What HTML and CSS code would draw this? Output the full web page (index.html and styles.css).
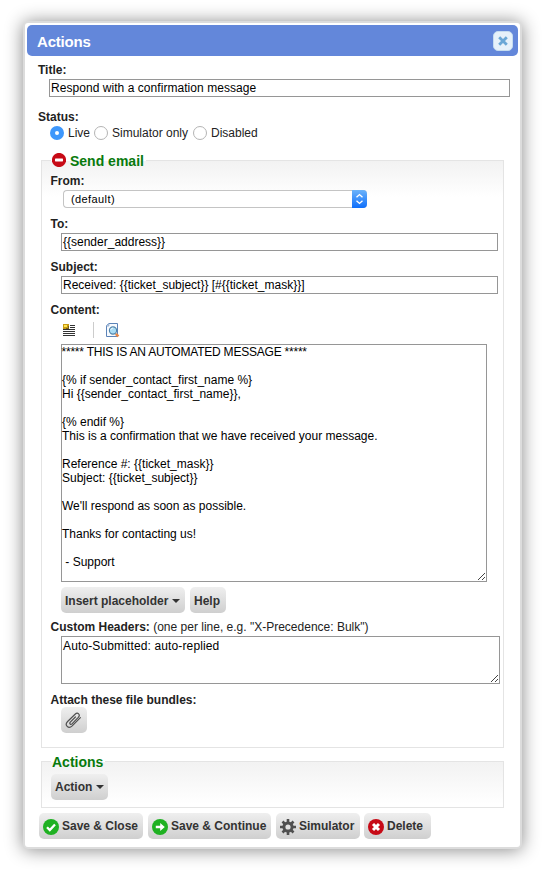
FILE: index.html
```html
<!DOCTYPE html>
<html lang="en">
<head>
<meta charset="utf-8">
<title>Actions</title>
<link rel="stylesheet" href="styles.css">
</head>
<body>
<div class="dialog">
  <header class="titlebar">
    <span>Actions</span>
    <button class="close" type="button" aria-label="Close">
      <svg width="10" height="10" viewBox="0 0 10 10"><path d="M2.2 2.2l5.6 5.6M7.8 2.2l-5.6 5.6" stroke="#6aa7d6" stroke-width="2.8" stroke-linecap="square"/></svg>
    </button>
  </header>
  <form class="form">
    <div class="label">Title:</div>
    <div class="field title-field">Respond with a confirmation message</div>
    <div class="label status-label">Status:</div>
    <div class="radios">
      <span class="radio on"></span><span class="live">Live</span>
      <span class="radio"></span><span class="sim">Simulator only</span>
      <span class="radio"></span><span>Disabled</span>
    </div>

    <fieldset class="group email">
      <legend>
        <svg width="14" height="14" viewBox="0 0 14 14"><circle cx="7" cy="7" r="7.1" fill="#c70a16"/><rect x="3" y="5.6" width="8" height="2.8" rx=".6" fill="#fff"/></svg>
        <span>Send email</span>
      </legend>
      <div class="label">From:</div>
      <div class="select">
        <span>(default)</span>
        <svg width="15" height="18" viewBox="0 0 15 18"><path d="M4.5 7.3l3-2.7 3 2.7M4.5 10.7l3 2.7 3-2.7" fill="none" stroke="#fff" stroke-width="1.4"/></svg>
      </div>
      <div class="label to">To:</div>
      <div class="field">{{sender_address}}</div>
      <div class="label subject">Subject:</div>
      <div class="field">Received: {{ticket_subject}} [#{{ticket_mask}}]</div>
      <div class="label content-label">Content:</div>
      <div class="toolbar">
        <svg class="ico-sign" width="12" height="12" viewBox="0 0 12 12">
          <path d="M0 5.5h12M0 7.5h12M0 9.5h12M0 11.5h12M7 1.5h5M7 3.5h5" stroke="#333"/>
          <rect width="6" height="5" fill="#c79a12"/><rect x="1" y="1" width="3" height="2" fill="#ffe650"/><path d="M3 4.5h3M5.5 2v3" stroke="#776018"/>
        </svg>
        <i class="sep"></i>
        <svg width="14" height="15" viewBox="0 0 14 15">
          <path d="M.5 2.8L2.8.5h8.7v13H.5z" fill="#f7fafe" stroke="#5c83b8"/>
          <path d="M.5 3h2.3V.5" fill="none" stroke="#8ba9ce"/>
          <path d="M9.8 10.8l2.6 2.6" stroke="#e88848" stroke-width="2.6"/>
          <circle cx="7" cy="7.5" r="3.6" fill="#a9dcf5" stroke="#4e82a8" stroke-width="1.1"/>
          <path d="M4.7 7a2.5 2.5 0 0 1 2.5-2" stroke="#effaff" fill="none"/>
        </svg>
      </div>
      <div class="textarea body"><span class="caps">***** THIS IS AN AUTOMATED MESSAGE *****</span>

{% if sender_contact_first_name %}
Hi {{sender_contact_first_name}},

{% endif %}
This is a confirmation that we have received your message.

Reference #: {{ticket_mask}}
Subject: {{ticket_subject}}

We'll respond as soon as possible.

Thanks for contacting us!

 - Support<svg class="grip" width="7" height="7" viewBox="0 0 7 7" shape-rendering="crispEdges"><path d="M0 6.5h1M1 5.5h1M2 4.5h1M3 3.5h1M4 2.5h1M5 1.5h1M6 .5h1M4 6.5h1M5 5.5h1M6 4.5h1" stroke="#444"/></svg></div>
      <div class="buttons inner">
        <button class="btn insert" type="button">Insert placeholder<i class="caret"></i></button>
        <button class="btn help" type="button">Help</button>
      </div>
      <div class="label headers-label">Custom Headers: <span class="hint">(one per line, e.g. "X-Precedence: Bulk")</span></div>
      <div class="textarea headers">Auto-Submitted: auto-replied<svg class="grip" width="7" height="7" viewBox="0 0 7 7" shape-rendering="crispEdges"><path d="M0 6.5h1M1 5.5h1M2 4.5h1M3 3.5h1M4 2.5h1M5 1.5h1M6 .5h1M4 6.5h1M5 5.5h1M6 4.5h1" stroke="#444"/></svg></div>
      <div class="label attach-label">Attach these file bundles:</div>
      <button class="btn attach" type="button" aria-label="Attach">
        <svg width="18" height="16" viewBox="0 0 18 16"><path d="M10.8 4.7L5.7 9.9c-1.3 1.5.3 3 1.7 1.7l6.3-6.5c2.5-2.8-.6-5.6-3.2-3.1L3 9.2c-3.5 3.6.8 7.9 4.6 4.4l8.2-8.3" transform="translate(-.4 .3)" fill="none" stroke="#505050" stroke-width="1.2" stroke-linecap="round"/></svg>
      </button>
    </fieldset>

    <fieldset class="group actions">
      <legend>Actions</legend>
      <button class="btn action" type="button">Action<i class="caret"></i></button>
    </fieldset>

    <div class="buttons footer">
      <button class="btn save-close" type="button">
        <svg width="16" height="16" viewBox="0 0 16 16"><circle cx="8" cy="8" r="8" fill="#1fb122"/><path d="M4 8.2l2.8 2.8L12 5.5" fill="none" stroke="#fff" stroke-width="2.3"/></svg>Save &amp; Close</button>
      <button class="btn save-continue" type="button">
        <svg width="16" height="16" viewBox="0 0 16 16"><circle cx="8" cy="8" r="8" fill="#1fb122"/><path d="M3.8 6.8h4.4V4l4.6 4-4.6 4V9.2H3.8z" fill="#fff"/></svg>Save &amp; Continue</button>
      <button class="btn simulator" type="button">
        <svg width="16" height="16" viewBox="0 0 16 16"><g stroke="#505050"><path d="M8 0v16M0 8h16M2.5 2.5l11 11M13.5 2.5l-11 11" stroke-width="2.6"/><circle cx="8" cy="8" r="4.1" fill="#e2e2e2" stroke-width="3"/></g></svg>Simulator</button>
      <button class="btn delete" type="button">
        <svg width="16" height="16" viewBox="0 0 16 16"><circle cx="8" cy="8" r="8" fill="#c70a16"/><path d="M5 5l6 6M11 5l-6 6" stroke="#fff" stroke-width="3"/></svg>Delete</button>
    </div>
  </form>
</div>
</body>
</html>
```
FILE: styles.css
```css
* { box-sizing: border-box; }

body {
  min-height: 876px;
  margin: 0;
  padding: 21px 25px 0 23px;
  background: #fff;
  font: 12px/14px "Liberation Sans", Arial, sans-serif;
  color: #222;
}

svg { display: block; flex: none; }

.dialog {
  height: 828px;
  padding: 2px;
  background: #fff;
  border: 2px solid #dcdcdc;
  border-radius: 5px;
  box-shadow: 0 1px 18px #888;
}

.titlebar {
  display: flex;
  align-items: center;
  justify-content: space-between;
  height: 31px;
  padding: 0 5px 0 10px;
  border-radius: 5px;
  background: #6387da;
  color: #fff;
  font-size: 15px;
  font-weight: bold;
  letter-spacing: -.2px;
  line-height: 17px;
}

.titlebar span { padding-top: 1px; }

.close {
  display: flex;
  align-items: center;
  justify-content: center;
  width: 20px;
  height: 20px;
  padding: 0;
  margin-top: 1px;
  border: 1px solid #c5dcf0;
  border-radius: 5px;
  background: #e6f1fa;
}

.form { padding: 7px 0 0 11px; }

.label { font-weight: bold; }
.hint { font-weight: normal; }

.field {
  width: 437px;
  height: 18px;
  margin: 2px 0 0 10px;
  padding-left: 1px;
  border: 1px solid #969696;
  background: #fff;
  color: #000;
  line-height: 16px;
}

.title-field {
  width: 461px;
  margin-left: 11px;
  letter-spacing: .05px;
}

.status-label { margin-top: 13px; }

.radios {
  display: flex;
  height: 14px;
  margin: 2px 0 0 12px;
}

.radio {
  width: 14px;
  height: 14px;
  margin-right: 4px;
  border: 1px solid #b4b4b4;
  border-radius: 50%;
  background: #fff;
}

.radio.on {
  border: 5px solid #3e97fb;
}

.live { width: 26px; }
.sim { width: 81px; }

.group {
  width: 463px;
  margin: 0 0 0 3px;
  padding: 6px 0 0 9px;
  border: 1px solid #e4e4e4;
}

.group .label { margin-left: -.5px; }

.group legend {
  display: flex;
  height: 15px;
  padding: 0 2px 0 1px;
  color: #087a0c;
  font-size: 14px;
  font-weight: bold;
  line-height: 16px;
}

.email {
  height: 595px;
  margin-top: 13px;
  background: linear-gradient(#f2f2f2, #fff 36px);
}

.email legend svg { margin-right: 4px; }

.select {
  display: flex;
  justify-content: space-between;
  width: 304px;
  height: 18px;
  margin: 2px 0 0 12px;
  border: 1px solid #c4c4c4;
  border-right: 0;
  border-radius: 4px;
  background: #fff;
  color: #000;
  font-size: 11px;
  letter-spacing: .4px;
  line-height: 17px;
}

.select span { padding-left: 7px; }

.select svg {
  margin-top: -1px;
  border-radius: 0 4px 4px 0;
  background: linear-gradient(#6cb3fa, #0f6ffb);
}

.to { margin-top: 9px; }
.subject { margin-top: 9px; }
.content-label { margin-top: 9px; }

.toolbar {
  display: flex;
  height: 17px;
  margin: 5px 0 0 12px;
}

.ico-sign { margin-top: 2px; }
.toolbar svg:last-child { margin-top: 1px; }

.sep {
  width: 1px;
  height: 16px;
  margin: 0 12px 0 18px;
  background: #ccc;
}

.textarea {
  position: relative;
  margin-left: 10px;
  border: 1px solid #969696;
  background: #fff;
  color: #000;
  white-space: pre;
}

.body {
  width: 426px;
  height: 238px;
  margin-top: 5px;
  text-indent: -.5px;
}

.caps { letter-spacing: -.22px; }

.headers {
  width: 439px;
  height: 48px;
  margin-top: 2px;
  padding: 2px 0 0 1px;
  letter-spacing: .13px;
}

.grip {
  position: absolute;
  right: 1px;
  bottom: 1px;
}

.buttons { display: flex; }
.inner { gap: 5px; margin: 5px 0 0 10px; }

.btn {
  display: flex;
  align-items: center;
  height: 26px;
  margin: 0;
  padding: 0 0 0 4px;
  border: 0;
  border-radius: 5px;
  background: linear-gradient(#efefef, #cfcfcf);
  color: #333;
  font: bold 12px/14px "Liberation Sans", Arial, sans-serif;
  white-space: nowrap;
}

.inner .btn { padding-top: 2px; }

.caret {
  margin-left: 4px;
  border: 4px solid transparent;
  border-top-color: #333;
  border-bottom: 0;
}

.insert { width: 124px; }
.help { width: 36px; }
.headers-label { margin-top: 7px; }
.attach-label { margin-top: 9px; }
.attach { width: 26px; margin-left: 10px; }

.actions {
  height: 54px;
  margin-top: 6px;
  padding-top: 5px;
  background: linear-gradient(#f2f2f2, #fff 42px);
}

.action { width: 57px; }

.footer { margin: 5px 0 0 1px; }

.footer svg {
  margin: 2px 3px 0 0;
}

.save-close { width: 104px; margin-right: 5px; }
.save-continue { width: 123px; margin-right: 5px; }
.simulator { width: 84px; margin-right: 4px; }
.delete { width: 67px; }
```
